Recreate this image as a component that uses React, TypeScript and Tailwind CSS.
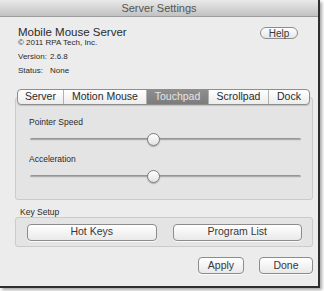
const font = { fontFamily: '"Liberation Sans", Arial, sans-serif' };

function Slider({ pos }: { pos: number }) {
  return (
    <div className="relative ml-[14px] mr-[11px] h-[14px] flex items-center">
      <div className="h-[3px] w-full rounded-full bg-gradient-to-b from-[#8a8a8a] to-[#b8b8b8] border-b border-[#d8d8d8]" />
      <div
        className="absolute top-[1px] h-[13px] w-[13px] rounded-full border border-[#7d7d7d] bg-gradient-to-b from-[#ffffff] to-[#e2e2e2] shadow-[0_1px_1px_rgba(0,0,0,0.25)]"
        style={{ left: pos - 6.5 }}
      />
    </div>
  );
}

function Btn({ label, w }: { label: string; w: string }) {
  return (
    <div
      className={`${w} h-[17px] flex items-center justify-center rounded-[4px] border border-[#8c8c8c] bg-gradient-to-b from-[#ffffff] to-[#e9e9e9] text-[10.5px] text-[#383838] shadow-[0_1px_0_rgba(255,255,255,0.8)]`}
    >
      {label}
    </div>
  );
}

const tabs = [
  { label: "Server", w: "w-[45px]" },
  { label: "Motion Mouse", w: "w-[83px]" },
  { label: "Touchpad", w: "w-[62px]", active: true },
  { label: "Scrollpad", w: "w-[60px]" },
  { label: "Dock", w: "w-[41px]" },
];

export default function App() {
  return (
    <div className="w-[324px] h-[291px] bg-white overflow-hidden" style={font}>
      <div className="w-[320px] h-[288px] bg-[#ececec] border-r-2 border-b-2 border-[#2e2e2e] shadow-[2px_2px_3px_rgba(0,0,0,0.35)] flex flex-col">
        <div className="h-[17px] shrink-0 bg-gradient-to-b from-[#e9e9e9] to-[#c2c2c2] border-b border-[#9c9c9c] flex items-center justify-center text-[11px] text-[#555]">
          Server Settings
        </div>

        <div className="pl-[15px] pr-[5px] pt-[9px] flex flex-col">
          <div className="flex justify-between pl-[3px] pr-[15px]">
            <div className="flex flex-col text-[#2a2a2a]">
              <div className="text-[11.5px] leading-[13px] mt-[-0.5px]">Mobile Mouse Server</div>
              <div className="text-[8px] leading-[10px] mt-[-0.5px]">© 2011 RPA Tech, Inc.</div>
              <div className="text-[8px] leading-[10px] mt-[4px] flex">
                <span className="w-[32px]">Version:</span>
                <span>2.6.8</span>
              </div>
              <div className="text-[8px] leading-[10px] mt-[4px] flex">
                <span className="w-[32px]">Status:</span>
                <span>None</span>
              </div>
            </div>
            <div className="mt-[1px] h-[12px] w-[38px] flex items-center justify-center rounded-full border border-[#8c8c8c] bg-gradient-to-b from-[#ffffff] to-[#e6e6e6] text-[10px] text-[#383838]">
              Help
            </div>
          </div>

          <div className="mt-[13px] flex flex-col">
            <div className="relative z-10 flex justify-center pr-[1px]">
              <div className="flex h-[16px] rounded-[4px] border border-[#8e8e8e] bg-gradient-to-b from-[#ffffff] to-[#ececec] overflow-hidden shadow-[0_1px_1px_rgba(0,0,0,0.15)]">
                {tabs.map((t, i) => (
                  <div
                    key={t.label}
                    className={`${t.w} flex items-center justify-center text-[10.5px] ${
                      t.active
                        ? "bg-gradient-to-b from-[#8e8e8e] to-[#7c7c7c] text-[#e6e6e6]"
                        : "text-[#2a2a2a]"
                    } ${i > 0 ? "border-l border-[#b0b0b0]" : ""}`}
                  >
                    {t.label}
                  </div>
                ))}
              </div>
            </div>
            <div className="-mt-[8px] h-[103px] rounded-[3px] border border-[#cbcbcb] bg-[#e4e4e4] pt-[18px] flex flex-col">
              <div className="pl-[13px] text-[8.5px] leading-[12px] text-[#2a2a2a]">Pointer Speed</div>
              <div className="mt-[4px]">
                <Slider pos={123} />
              </div>
              <div className="mt-[7px] pl-[13px] text-[8.5px] leading-[12px] text-[#2a2a2a]">Acceleration</div>
              <div className="mt-[4px]">
                <Slider pos={123} />
              </div>
            </div>
          </div>

          <div className="mt-[7px] pl-[5px] text-[8.5px] leading-[10px] text-[#2a2a2a]">Key Setup</div>
          <div className="h-[30px] rounded-[3px] border border-[#cbcbcb] bg-[#e4e4e4] flex items-center pl-[11px] pr-[10px] gap-[16px]">
            <Btn label="Hot Keys" w="w-[130px]" />
            <Btn label="Program List" w="w-[130px]" />
          </div>

          <div className="mt-[10px] flex justify-end gap-[15px]">
            <Btn label="Apply" w="w-[46px]" />
            <Btn label="Done" w="w-[54px]" />
          </div>
        </div>
      </div>
    </div>
  );
}
